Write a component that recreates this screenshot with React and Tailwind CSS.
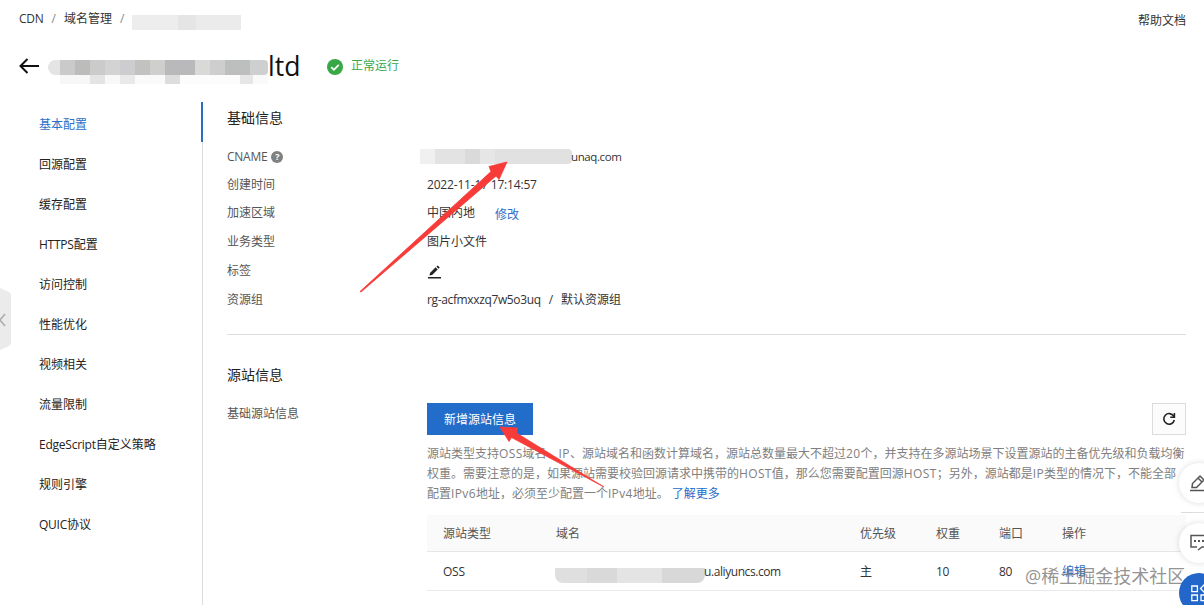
const menu = [
  "基本配置",
  "回源配置",
  "缓存配置",
  "HTTPS配置",
  "访问控制",
  "性能优化",
  "视频相关",
  "流量限制",
  "EdgeScript自定义策略",
  "规则引擎",
  "QUIC协议",
];

const titleMaskTop = [
  "w-[12px] rounded-l-lg bg-[#e4e4e4]",
  "w-[15px] bg-[#cacaca]",
  "w-[15px] bg-[#bcbcbb]",
  "w-[15px] bg-[#cbcbcc]",
  "w-[15px] bg-[#d3d3d4]",
  "w-[15px] bg-[#cdcdd0]",
  "w-[15px] bg-[#c2c2c0]",
  "w-[15px] bg-[#cfcfce]",
  "w-[30px] bg-[#b9b9bb]",
  "w-[15px] bg-[#d9d9d8]",
  "w-[15px] bg-[#cdcecd]",
  "w-[25px] bg-[#bdbebe]",
  "w-[18px] rounded-r bg-[#cdcfd0]",
];

const titleMaskBottom = [
  "w-[12px]",
  "w-[30px] bg-[#f7f7f7]",
  "w-[15px] bg-[#e4e4e5]",
  "w-[15px] bg-[#f8f8f8]",
  "w-[15px] bg-[#e9e9ea]",
  "w-[30px] bg-[#fafafa]",
  "w-[15px] bg-[#dddddd]",
  "w-[60px] bg-[#fcfcfc]",
  "w-[13px] bg-[#e6e6e6]",
  "w-[15px] bg-[#fafafa]",
];

// Latin runs sit slightly tighter than the Chinese text around them
const En = ({ children }) => (
  <span className="tracking-[-0.02em]">{children}</span>
);

const MenuLabel = ({ text }) => {
  const latin = text.match(/^[A-Za-z]*/)[0];
  return (
    <>
      {latin && <En>{latin}</En>}
      {text.slice(latin.length)}
    </>
  );
};

const InfoRow = ({ label, height, children }) => (
  <div className={`flex items-center ${height}`}>
    <div className="flex w-[200px] items-center gap-1 text-[#555]">{label}</div>
    <div className="flex items-center text-[#333]">{children}</div>
  </div>
);

const Header = () => (
  <header className="h-[102px] pt-[9px]">
    <div className="flex h-5 items-center justify-between pr-[18px] pl-[19px]">
      <div className="flex items-center text-[#333]">
        <En>CDN</En>
        <span className="mx-2 text-[#888]">/</span>
        域名管理
        <span className="mx-2 text-[#888]">/</span>
        <span className="mt-1.5 flex h-[15px]">
          <span className="w-[46px] bg-[#ededed]" />
          <span className="w-[18px] bg-[#e5e5e5]" />
          <span className="w-[45px] bg-[#ebebeb]" />
        </span>
      </div>
      <div className="pt-1 text-[#333]">帮助文档</div>
    </div>
    <div className="mt-[18px] flex h-[38px] items-center pl-[19px]">
      <svg width="21" height="16" viewBox="0 0 21 16" fill="none" stroke="#111" strokeWidth="2">
        <path d="M8.5 1 1.5 8l7 7M1.5 8H20" />
      </svg>
      <div className="ml-2 flex flex-col pt-[12px]">
        <div className="flex h-[15px]">
          {titleMaskTop.map((c, i) => (
            <span key={i} className={c} />
          ))}
        </div>
        <div className="flex h-[9px]">
          {titleMaskBottom.map((c, i) => (
            <span key={i} className={c} />
          ))}
        </div>
      </div>
      <h1 className="w-[59px] text-[26.5px] leading-[38px] text-[#111]">ltd</h1>
      <svg className="mt-0.5" width="16" height="16" viewBox="0 0 16 16">
        <circle cx="8" cy="8" r="8" fill="#38a847" />
        <path d="m4.2 8.2 2.7 2.6 4.9-4.9" fill="none" stroke="#fff" strokeWidth="1.8" />
      </svg>
      <span className="ml-2 text-[#38a847]">正常运行</span>
    </div>
  </header>
);

const Sidebar = () => (
  <nav className="w-[203px] shrink-0 border-r border-[#dcdcdc]">
    {menu.map((item, i) => (
      <div
        key={item}
        className={
          i === 0
            ? "-mr-px flex h-10 items-center border-r-2 border-[#2a6fb8] pt-1.5 pl-[39px] text-[#2d6fc9]"
            : "flex h-10 items-center pt-1.5 pl-[39px] text-[#222]"
        }
      >
        <span>
          <MenuLabel text={item} />
        </span>
      </div>
    ))}
  </nav>
);

const BasicInfo = () => (
  <section className="h-[233px] border-b border-[#dedede]">
    <h2 className="h-[41px] pt-[5px] text-sm leading-[22px] text-[#222]">基础信息</h2>
    <InfoRow
      height="h-[28px]"
      label={
        <>
          <En>CNAME</En>
          <span className="flex h-3 w-3 items-center justify-center rounded-full bg-[#808080] text-[9px] font-bold text-white">
            ?
          </span>
        </>
      }
    >
      <span className="-ml-[7px] flex h-[15px]">
        <span className="w-[15px] bg-[#f0f0f0]" />
        <span className="w-[30px] bg-[#e3e3e3]" />
        <span className="w-[15px] bg-[#dadada]" />
        <span className="w-[15px] bg-[#e6e6e6]" />
        <span className="w-[77px] rounded-r bg-[#e1e1e1]" />
      </span>
      <span className="-ml-px text-[11.5px] tracking-[-0.035em]">unaq.com</span>
    </InfoRow>
    <InfoRow height="h-[28px]" label="创建时间">
      <span className="tracking-[-0.015em]">2022-11-17 17:14:57</span>
    </InfoRow>
    <InfoRow height="h-[27px]" label="加速区域">
      中国内地
      <a className="mt-1 ml-5 text-[#2d6fc9]">修改</a>
    </InfoRow>
    <InfoRow height="h-[32px]" label="业务类型">
      图片小文件
    </InfoRow>
    <InfoRow height="h-[25px]" label="标签">
      <svg className="mt-[3px]" width="16" height="14" viewBox="0 0 16 14" fill="#222">
        <path d="M1 12h13v1.5H1zM2.500 10.500l.5-2.600 5.600-5.600 2.100 2.100-5.600 5.600zM9.400 1.600 10.700.4l2.100 2-1.300 1.300z" />
      </svg>
    </InfoRow>
    <InfoRow height="h-[34px]" label="资源组">
      <span className="tracking-[-0.03em]">rg-acfmxxzq7w5o3uq</span>
      <span className="mx-2">/</span>
      默认资源组
    </InfoRow>
  </section>
);

const OriginTable = () => (
  <table className="mt-3 w-full table-fixed text-left text-[#333]">
    <colgroup>
      <col className="w-[113px]" />
      <col className="w-[304px]" />
      <col className="w-[76px]" />
      <col className="w-[63px]" />
      <col className="w-[63px]" />
      <col />
    </colgroup>
    <thead>
      <tr className="h-[36px] border-b border-[#e6e6e6] bg-[#fafafa] text-[#555]">
        <th className="pt-0.5 pl-4 font-normal">源站类型</th>
        <th className="pt-0.5 pl-4 font-normal">域名</th>
        <th className="pt-0.5 pl-4 font-normal">优先级</th>
        <th className="pt-0.5 pl-4 font-normal">权重</th>
        <th className="pt-0.5 pl-4 font-normal">端口</th>
        <th className="pt-0.5 pl-4 font-normal">操作</th>
      </tr>
    </thead>
    <tbody>
      <tr className="h-[39px] border-b border-[#e9e9e9]">
        <td className="pt-0.5 pl-4">
          <En>OSS</En>
        </td>
        <td className="pt-0.5 pl-[15px]">
          <div className="flex items-center">
            <span className="mt-2 flex h-[15px] overflow-hidden rounded-b-lg">
              <span className="w-[32px] bg-[#dfdfdf]" />
              <span className="w-[30px] bg-[#d9d9d9]" />
              <span className="w-[45px] bg-[#e4e4e4]" />
              <span className="w-[43px] bg-[#d8d8d8]" />
            </span>
            <span className="-ml-px tracking-[-0.035em]">u.aliyuncs.com</span>
          </div>
        </td>
        <td className="pt-0.5 pl-4">主</td>
        <td className="pt-0.5 pl-4">
          <En>10</En>
        </td>
        <td className="pt-0.5 pl-4">
          <En>80</En>
        </td>
        <td className="pt-0.5 pl-4 text-[#2d6fc9]">编辑</td>
      </tr>
    </tbody>
  </table>
);

const OriginInfo = () => (
  <section className="pt-[29px]">
    <h2 className="h-[39px] text-sm leading-[22px] text-[#222]">源站信息</h2>
    <div className="flex">
      <div className="w-[200px] shrink-0 pt-px leading-5 text-[#555]">基础源站信息</div>
      <div className="w-[759px]">
        <div className="flex h-8 justify-between">
          <button className="w-[106px] bg-[#226dca] pt-0.5 text-white">新增源站信息</button>
          <button className="flex w-[34px] items-center justify-center border border-[#dcdcdc] bg-[#fcfcfc]">
            <svg width="14" height="14" viewBox="0 0 14 14" fill="none" stroke="#222" strokeWidth="1.6">
              <path d="M11.7 4.2A5.3 5.3 0 1 0 12.3 8M12.4 1v4.2H8.2" />
            </svg>
          </button>
        </div>
        <p className="mt-[9px] -mb-px leading-5 whitespace-nowrap text-[#808080] [&_span]:tracking-[0.03em]">
          源站类型支持<En>OSS</En>域名、<En>IP</En>、源站域名和函数计算域名，源站总数量最大不超过<En>20</En>个，并支持在多源站场景下设置源站的主备优先级和负载均衡
          <br />
          权重。需要注意的是，如果源站需要校验回源请求中携带的<En>HOST</En>值，那么您需要配置回源<En>HOST</En>；另外，源站都是<En>IP</En>类型的情况下，不能全部
          <br />
          配置<En>IPv6</En>地址，必须至少配置一个<En>IPv4</En>地址。
          <a className="ml-[3px] text-[#226dca]">了解更多</a>
        </p>
        <OriginTable />
      </div>
    </div>
  </section>
);

const FloatingTools = () => (
  <div className="absolute top-[463px] left-[1179px] w-10">
    <div className="flex h-10 w-10 items-center rounded-full bg-white pl-[11px] shadow-[0_0_6px_rgba(0,0,0,0.14)]">
      <svg width="18" height="18" viewBox="0 0 18 18" fill="none" stroke="#555" strokeWidth="1.5">
        <path d="M0 16.5h18M2 13.5l.5-4L10 2l4 4-7.5 7.5zM8 4l4 4" />
      </svg>
    </div>
    <div className="mt-[9px] ml-0.5 h-px bg-[#dcdcdc]" />
    <div className="mt-[10px] flex h-10 w-10 items-center rounded-full bg-white pl-[11px] shadow-[0_0_6px_rgba(0,0,0,0.14)]">
      <svg width="20" height="18" viewBox="0 0 20 18" fill="none" stroke="#555" strokeWidth="1.5">
        <path d="M7 13H1V1.5h18V13h-7l-4 3" />
        <path d="M4 7h11" strokeWidth="2" strokeDasharray="2 2" />
      </svg>
    </div>
    <div className="mt-[10px] flex h-10 w-10 items-center rounded-full bg-[#2166c8] pl-3">
      <svg width="18" height="18" viewBox="0 0 18 18" fill="none" stroke="#fff" strokeWidth="1.3">
        <path d="M.8 2h5.6v5.6H.8zM.8 11h5.6v5.6H.8zM10 11h5.6v5.6H10zM13.5.5l4 4-4 4-4-4z" />
      </svg>
    </div>
  </div>
);

export default function App() {
  return (
    <div className="relative h-[605px] w-[1204px] overflow-hidden bg-white font-['Open_Sans','Noto_Sans_CJK_SC',sans-serif] text-xs">
      <Header />
      <div className="flex h-[503px]">
        <Sidebar />
        <main className="w-[983px] pl-6">
          <BasicInfo />
          <OriginInfo />
        </main>
      </div>

      <svg className="absolute top-[288px] left-0" width="11" height="62" viewBox="0 0 11 62">
        <path d="M0 0 9 4q2 1 2 3v48q0 2-2 3l-9 4z" fill="#ebebeb" />
        <path d="m5 26-5 6 5 6" fill="none" stroke="#aaa" strokeWidth="1.5" />
      </svg>

      <svg
        className="absolute inset-0"
        width="1204"
        height="605"
        fill="#f73b38"
        stroke="#f73b38"
        strokeWidth="0.8"
        strokeLinejoin="round"
      >
        <path d="M360 291.500 491 171.500l-2-5L507 162l-8 17.500-3-3.500L361 292z" />
        <path d="M604 487 511.500 437.500 509 441.500 500 427l17.500 1-1 5z" />
      </svg>

      <div className="absolute top-[563px] left-[1025px] text-lg leading-[27px] whitespace-nowrap text-[#777]/80">
        @稀土掘金技术社区
      </div>
      <FloatingTools />
    </div>
  );
}
